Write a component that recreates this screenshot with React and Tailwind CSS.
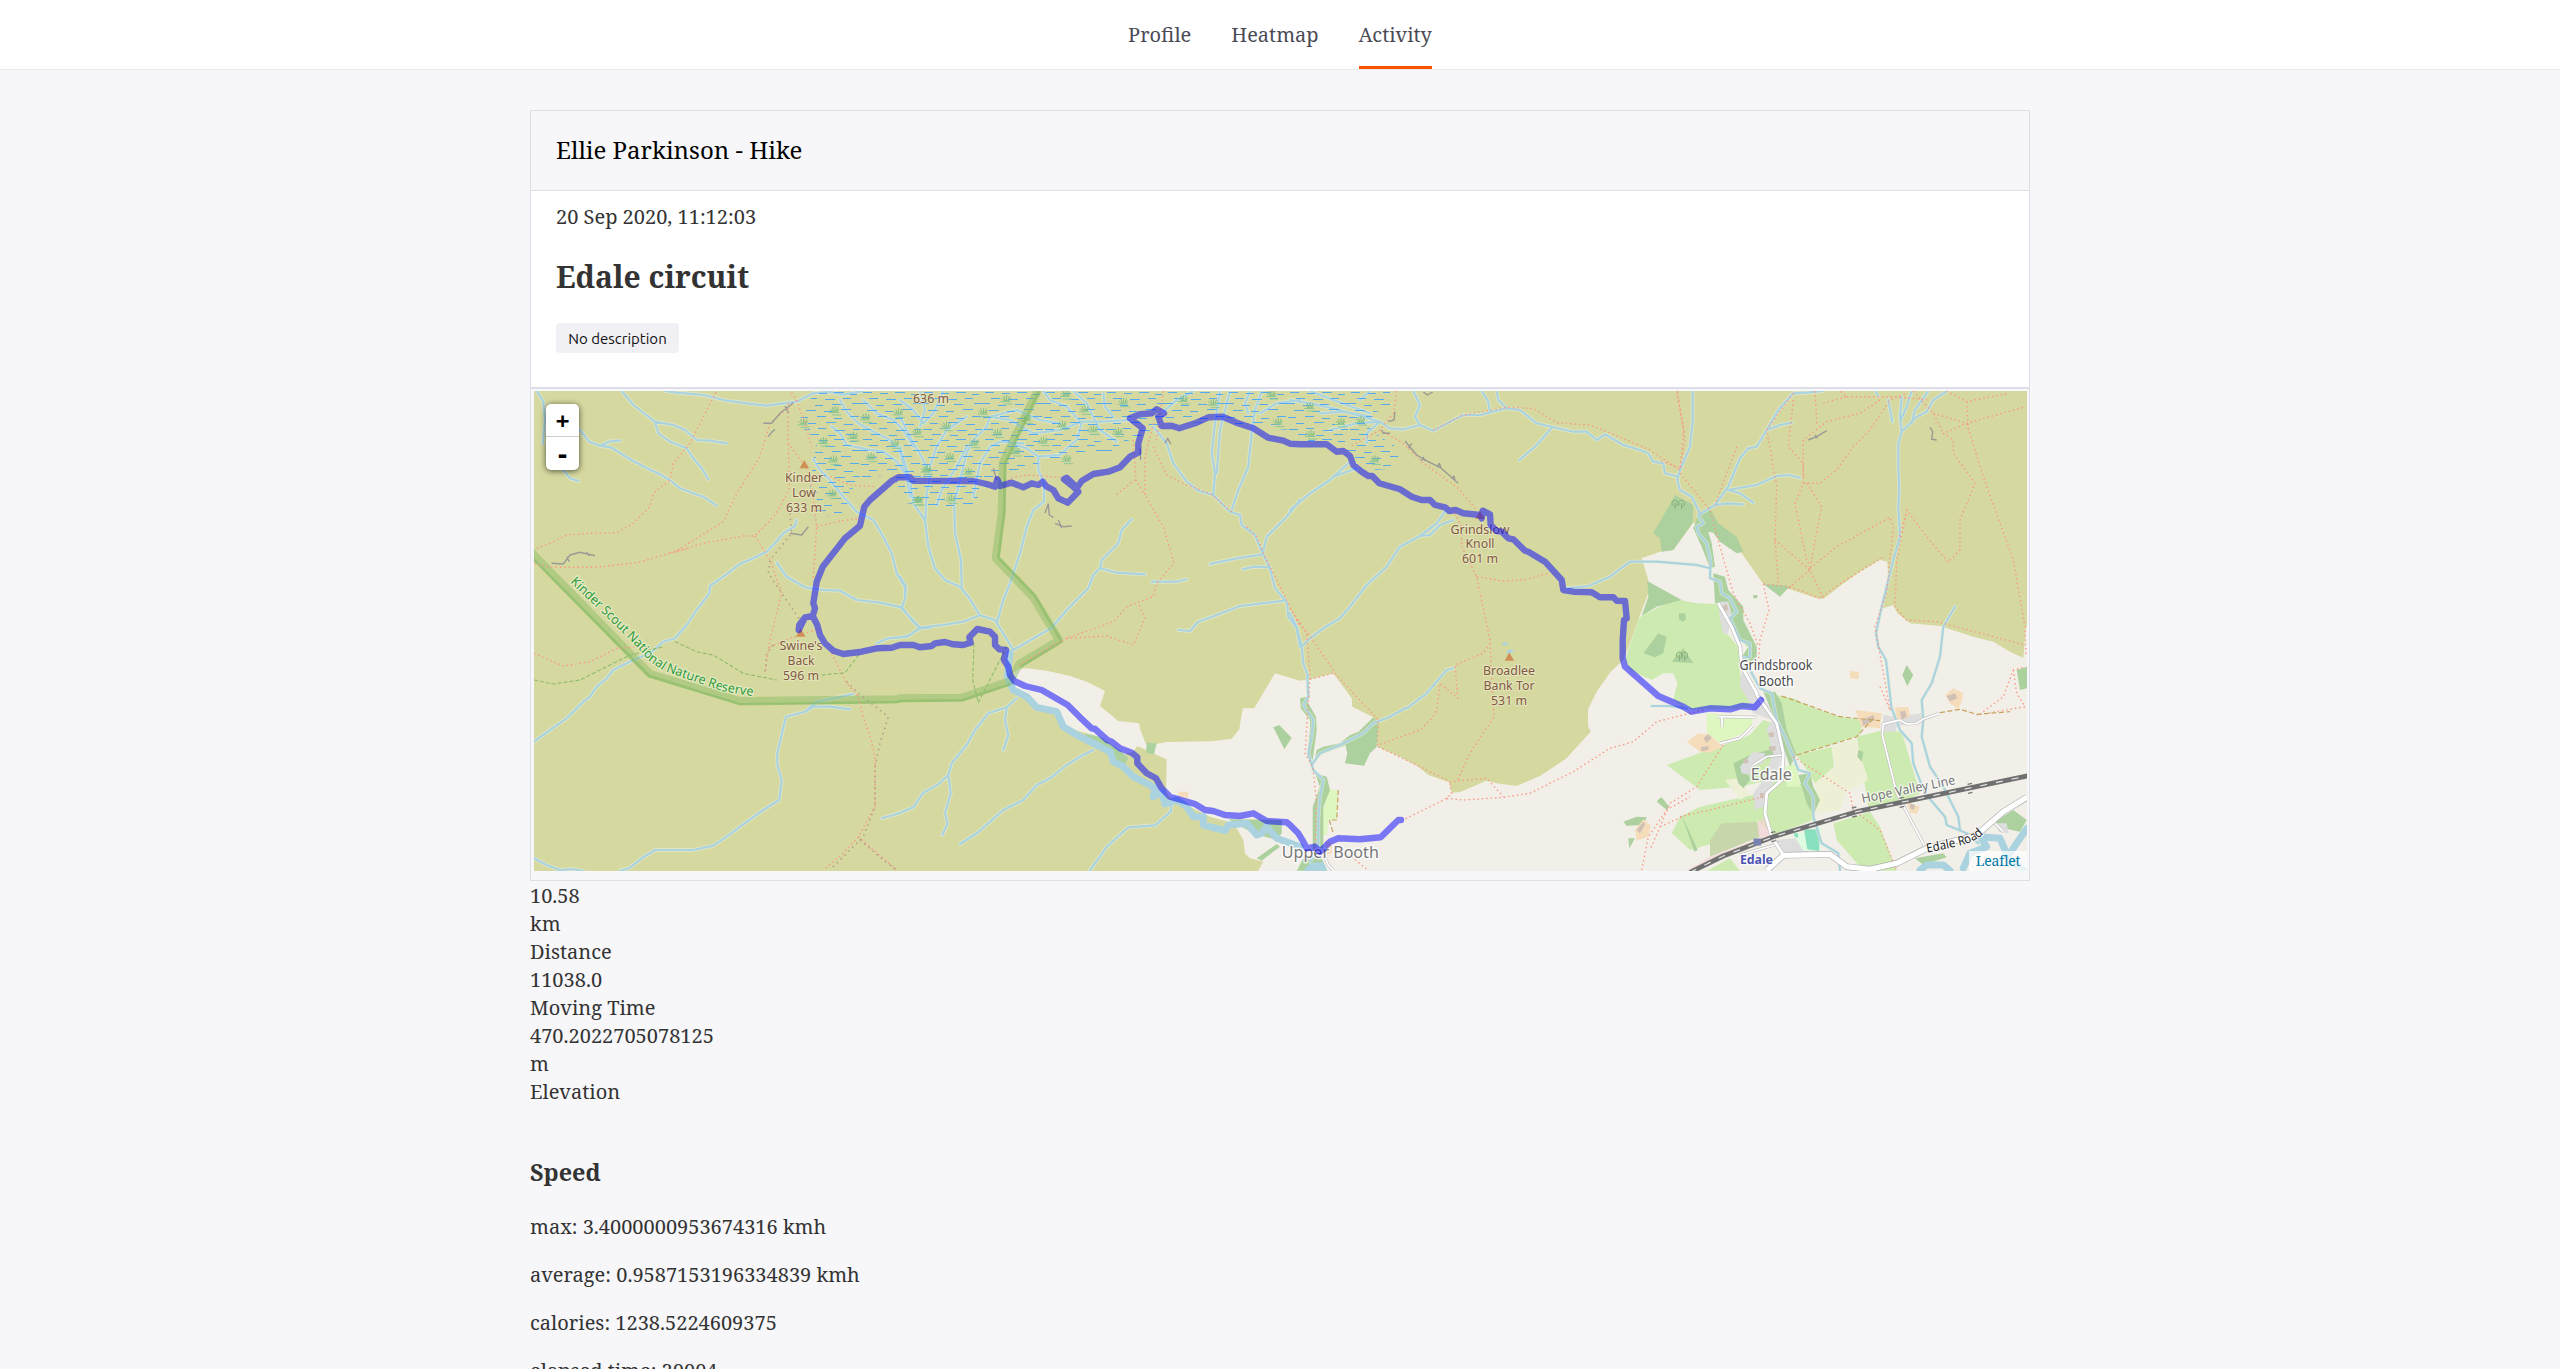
import React from "react";

const SERIF = "font-['Noto_Serif','DejaVu_Serif_Condensed','DejaVu_Serif',serif]";

/* Survey sheets of the map: origin of each sheet, drawn at three units to the pixel. */
const SHEETS = {
  A: [530, 380], B: [900, 380], C: [1290, 380], D: [1660, 380],
  E: [530, 640], F: [900, 620], G: [1290, 620], H: [1650, 620],
};

const pt = (s, p) => {
  const [x, y] = p.split(",").map(Number);
  return `${(SHEETS[s][0] + x / 3).toFixed(1)},${(SHEETS[s][1] + y / 3).toFixed(1)}`;
};

/* "A 1,2 3,4 B 5,6" -> one polyline across sheets */
const line = (src) => {
  let s = "A";
  const out = [];
  src.trim().split(/\s+/).forEach((t) => {
    if (SHEETS[t]) s = t;
    else out.push(pt(s, t));
  });
  return "M" + out.join("L");
};
const lines = (list) => list.map(line).join("");
const areas = (list) => list.map((l) => line(l) + "Z").join("");

const LAND = areas([
  "F 355,148 380,145 440,152 510,168 560,185 615,213 600,258 655,303 718,310 720,328 738,372 768,372 800,366 935,364 995,356 1018,328 1028,265 1063,265 1125,160 1200,182 G 60,178 130,160 185,235 187,260 250,292 262,380 330,410 385,440 415,465 478,487 485,518 510,516 590,482 620,490 680,498 750,468 828,416 902,335 894,318 894,268 920,215 962,155 1000,120 1020,70 1045,0 C 1075,640 1075,600 1055,535 1110,515 D 40,510 100,428 150,440 200,480 245,520 310,612 390,628 470,655 490,657 540,618 600,575 660,540 682,545 685,600 668,685 700,676 712,700 750,730 840,738 940,770 1000,785 1055,818 1090,833 1098,740 1110,740 H 1140,760 F 1070,760 1090,725 1050,715 1035,700 1030,660 1010,625 985,605 930,590 870,560 808,530 798,515 800,418 712,378 700,395 665,405 560,340 490,320 480,290 410,262 370,225 340,200 340,160",
]);

const MEADOW = areas([
  "C 1055,707 1120,675 1170,660 D 60,660 110,670 175,672 200,760 235,800 240,880 260,950 290,975 H 320,262 240,268 160,268 125,270 85,240 G 1200,275 1150,240 1162,190 1150,160 1120,160 1085,180 1020,150 1005,120 1045,0",
  "H 380,225 430,235 480,260 570,290 640,300 630,345 540,375 440,405 410,330",
  "H 50,435 160,395 220,375 300,345 340,300 370,310 395,400 360,480 270,500 150,510",
  "H 90,590 150,560 330,520 350,480 440,480 490,530 490,600 370,645 320,600 230,585",
  "H 620,350 700,330 755,335 810,520 760,545 655,560",
  "H 440,405 545,380 552,440 495,490",
  "H 550,610 660,575 690,620 740,752 640,752 560,660",
  "H 65,640 90,590 230,580 320,600 330,630 120,690",
  "H 170,752 240,715 270,752",
]);

const LAWN = areas([
  "H 170,280 310,290 300,330 210,370 170,340",
  "H 405,440 440,430 450,500 410,500",
  "G 115,508 145,512 140,600 115,600 110,645 95,645 100,570",
]);

const CREAM = areas([
  "H 545,380 615,355 655,480 600,510 495,490 555,440",
  "H 495,490 590,510 570,570 500,580",
  "H 225,480 265,475 300,520 270,540",
]);

const FOREST = areas([
  "C 1155,345 1210,375 D 98,428 D 40,510 C 1115,515 1110,475 1090,460",
  "D 150,385 175,430 230,470 250,515 230,520 180,485 160,458 145,455 155,490 165,560 150,565 125,500 100,445 115,405",
  "D 160,580 195,590 205,630 250,680 250,720 290,800 290,830 270,850 240,840 265,800 240,780 205,710 190,670 165,670",
  "D 310,612 390,618 360,650",
  "D 740,855 760,885 742,918 727,885",
  "D 1070,870 1101,860 1101,925 1080,930",
  "D 280,645 292,645 292,655 280,655",
  "C 1072,603 1175,660 1100,680 1055,707 1075,650",
  "C 1060,820 1105,760 1130,770 1120,820 1095,832",
  "C 1167,700 1185,700 1188,718 1177,726 1166,716",
  "C 1145,845 1180,805 1210,850",
  "F 555,340 600,350 665,395 685,415 670,440 640,420 560,355",
  "F 740,368 770,370 762,403 738,398",
  "F 1120,322 1138,315 1175,353 1153,388",
  "F 985,598 1145,600 1145,640 1130,660 1060,640",
  "F 1070,715 1130,672 1140,680 1085,722",
  "G 30,235 50,230 55,250 78,290 80,330 68,420 52,400 60,330 60,300 32,265",
  "G 165,370 175,365 250,292 265,310 260,380 240,400 222,437 165,430 172,400",
  "G 75,415 80,390 100,380 150,370 180,345 220,330 215,345 160,378 100,400",
  "G 75,460 110,470 120,510 100,560 100,690 68,690 68,560 90,500",
  "G 1000,605 1040,590 1070,592 1060,615 1010,617",
  "G 1015,655 1035,655 1018,685",
  "G 1100,545 1110,533 1138,560 1130,570",
  "G 20,752 40,715 95,715 112,752",
  "H 20,545 35,532 58,560 50,570",
  "H 95,585 143,690 133,695",
  "H 340,215 375,215 395,250 410,330 440,405 420,440 400,380 380,310",
  "H 250,430 300,405 390,380 385,410 330,420 290,440 300,480 280,505 265,490",
  "H 445,465 480,460 490,500 510,540 490,585 470,550",
  "H 625,390 640,395 635,425 622,410",
  "H 1035,605 1090,570 1130,600 1110,635 1060,625",
  "H 795,715 880,700 890,712 820,735",
  "H 1100,150 1131,140 1131,200 1110,208",
]);

const OLIVE = areas(["H 215,610 320,605 330,650 180,710 180,660"]);

const BUILT = areas([
  "H 275,150 300,190 350,250 385,310 395,400 380,470 350,520 340,560 315,570 310,520 340,480 370,400 350,330 365,300 310,280 295,240 270,200",
  "H 270,440 310,395 345,400 340,430 310,440 300,465 275,460",
  "D 175,665 205,665 215,700 205,760 190,762 180,720",
  "H 700,285 740,290 815,280 820,300 740,320 735,335 697,335",
  "H 370,660 440,655 480,700 400,705",
  "H 1040,610 1070,610 1075,640 1045,635",
]);

const YARD = areas([
  "H 600,153 627,155 625,178 600,175",
  "H 885,225 910,205 940,220 935,245 925,268 900,250",
  "H 615,270 695,280 690,325 635,320",
  "H 735,262 775,262 780,290 740,300",
  "H 110,365 145,340 180,345 218,380 180,398 150,395",
  "H 770,548 810,560 800,582 780,578",
  "G 1035,630 1060,598 1082,615 1075,650 1040,662",
  "F 835,515 865,515 865,535 835,530",
  "G 105,660 125,670 125,700 110,705",
]);

const BUILDINGS = areas([
  "H 160,355 175,342 185,355 170,368", "H 152,382 175,378 175,390 155,394",
  "H 890,228 915,220 922,235 900,244", "H 635,300 670,285 675,300 640,318",
  "H 750,275 765,272 770,290 755,300", "H 355,340 370,335 372,350 358,352",
  "H 355,380 378,378 376,392 358,390", "H 280,420 292,415 296,428 284,432",
  "D 185,680 200,672 205,690 190,695", "G 1040,630 1060,605 1066,612 1050,640",
  "H 330,520 342,518 340,535 330,532", "H 780,550 795,555 792,570 780,565",
]);

const PINK = areas([
  "H 322,605 352,590 357,650 327,655",
  "H 180,710 330,655 300,680 150,745 110,752",
]);

const STREAMS = lines([
  "A 20,33 40,65 45,120 38,190",
  "A 100,270 120,295 145,303",
  "A 150,150 178,185 210,197 245,203 300,238 345,262 380,278 420,300 450,325 490,340 520,350 560,377",
  "A 210,197 240,184 270,182",
  "A 275,33 310,75 345,102 375,125 430,135 465,150 500,180 540,182 590,190",
  "A 375,125 385,160 420,185 470,205 490,235 515,265 535,298",
  "A 405,33 440,38 520,45 590,62 650,70 710,77 760,70 800,65 850,40 900,36 940,44 1000,33",
  "A 800,420 795,438 760,460 735,490 710,515 670,535 628,553 580,590 540,618 538,640 500,690 470,735 435,775 400,785 360,820 310,840 250,870 230,895 200,920 180,950 160,965 E 150,195 110,235 60,270 12,305",
  "A 740,548 770,590 825,622 880,630 930,632 980,660 1050,668 1115,682 1150,725 1170,745 1200,743",
  "A 1040,790 1075,775 1130,770 1170,745",
  "A 850,237 870,270 900,300 940,350 980,395 1030,420 1060,470 1085,520 1100,580 1125,620 1125,655 1115,682",
  "A 930,60 950,95 985,130 1040,160 1080,180 1110,215 1130,290 1140,350",
  "A 905,140 930,160 950,195 1010,208 1060,215 1100,245 1125,280",
  "A 1000,60 1040,100 1090,120 1120,150 1150,200",
  "E 825,215 860,185 910,175 970,162", "E 825,215 850,200 900,200 960,208",
  "E 825,215 768,230 758,270 742,340 742,375 755,420 748,480 700,510 630,560 590,590 550,617 490,630 375,630 335,655 300,683 270,693",
  "E 12,655 50,675 90,690 125,687 160,693",
  "F -55,595 -20,585 0,578 40,562 70,518 115,493 145,465 155,430 200,375 225,330 265,280 320,262 350,235",
  "F 145,465 152,520 135,580 143,610 127,645", "F 320,262 315,300 325,345 310,390",
  "F 180,672 230,640 310,570 370,540 410,495 450,475 500,435 540,410 580,390",
  "F 570,750 600,710 620,680 685,622 765,616 812,575 815,550",
  "B 60,743 130,735 190,725 240,706 285,720 340,810",
  "B 240,706 205,650 180,620 135,600 105,565 85,500 75,420 40,370 30,300 0,200",
  "B 75,430 80,340 90,290 70,240 30,170 0,110", "B 90,260 110,200 140,150 200,110",
  "B 185,620 183,540 165,460 163,370 180,300 200,220 220,180 260,140 270,110",
  "B 220,350 240,250 270,200 300,185 370,190", "B 110,375 125,330 170,260 200,200",
  "B 290,730 310,660 330,610 360,520 380,440 400,390 432,365 432,310 415,270 415,230 380,205 330,190",
  "B 415,230 480,225 500,205 530,180 545,130 500,80 450,60 430,33",
  "B 270,110 330,120 400,160 480,150 545,125 600,125 690,120",
  "B 270,110 350,90 420,120 480,130", "B 520,33 560,70 580,110 600,150 650,185",
  "B 610,40 615,80 640,110", "B 60,33 75,90 60,140", "B 0,60 40,90 70,130 100,100 130,33",
  "B 340,810 455,743 500,690 565,625 580,585 600,565 605,540 655,490 665,450 695,418",
  "B 600,565 650,578 735,583", "B 0,590 18,620 15,655 5,685 60,743", "B 0,773 30,765 60,743",
  "B 755,605 830,605 860,598", "B 835,750 870,753 895,725 950,705 1020,678 1155,662",
  "B 930,552 1010,535 1090,523", "B 1028,568 1060,560 1110,562",
  "B 1200,360 1160,410 1100,470 1088,520",
  "B 760,140 800,190 820,250 860,305 895,332 940,345 990,395 1020,405 1025,435 1065,465 1088,520 1110,565 1125,625 1160,665 1165,710 1190,745 1200,800",
  "B 790,95 830,60 880,33",
  "B 940,345 945,280 935,220 945,130 960,33", "B 950,280 960,150 990,33",
  "B 995,390 1015,330 1045,260 1055,160 1065,90 1085,33", "B 1045,100 1035,70 1050,33", "B 1080,100 1130,70 1200,60",
  "C 0,60 60,70 130,85 200,105 270,125", "C 90,100 160,95 240,110", "C 120,150 200,130 270,125", "C 60,33 130,60 240,100",
  "C 230,190 230,160 270,125", "C 210,60 240,33",
  "C 0,390 60,340 120,300 175,250", "C 130,290 200,265",
  "C 465,395 440,430 390,468 330,500 290,560 230,615 180,680 150,715 100,745 60,775 35,800",
  "C 490,420 450,435 420,465 390,468",
  "C 490,865 470,870 410,940 350,985 G 345,265 300,290 250,310 220,340 150,375 90,400 68,430",
  "C 370,33 390,75 375,110 390,135 430,152 480,125 520,105 570,105 650,85 690,90 740,130 790,142 850,155 890,155 920,180 945,163 1000,195 1050,210 1075,220 1090,245 1120,250 1125,280 1165,290",
  "C 390,135 340,148 300,145 270,125", "C 575,33 595,65 600,95", "C 620,33 625,60 650,85",
  "C 787,142 740,195 688,240", "C 830,625 895,618 960,590 1020,545 1100,545 1200,553 D 110,555 150,565",
  "C 0,700 20,740 35,800 40,850 55,890 G 52,170 55,230 40,255 70,300 65,350 55,400 70,450 100,480 90,530 85,600 85,690 60,725",
  "D 98,33 98,120 90,200 60,270 52,300 60,330 95,350 120,400 115,405 130,430 110,440 115,460 140,490 152,545 150,595 180,605 185,640 210,655 230,695 210,715 240,780 270,790 270,830 245,835",
  "D 120,402 165,375 205,320 225,270 240,235 265,205 290,200 320,150 355,90 400,40 440,38 490,33",
  "D 320,150 360,135 395,128", "D 205,330 290,315 350,288 385,285 420,293",
  "D 205,330 240,340 280,368", "D 165,375 205,370 250,373",
  "D 725,155 715,190 715,260 718,330 715,380 720,470 700,540 665,680 648,760 655,800 678,840 695,990",
  "D 725,155 720,110 725,50", "D 722,120 740,80 755,33", "D 725,155 770,110 800,95 820,60 860,33", "D 755,130 765,90 805,33",
  "D 685,60 697,125", "D 645,33 655,48",
  "D 885,680 850,740 840,830 815,910 785,960 790,1020 785,1070 810,1160 850,1220 895,1310 900,1350",
  "H 725,265 750,330 785,370 790,430 825,520 885,590 890,615 950,640 985,670",
  "H 270,130 300,150 330,205 365,220 380,300 405,350 430,410 445,450 480,460 465,490 490,530 490,590 515,670 565,700 570,750",
  "H 5,258 60,258 110,265",
]);

const RIVERS = lines([
  "F 330,100 322,170 340,210 380,230 410,262 470,275 490,320 540,350 600,380 630,395 640,425 670,440 700,470 740,490 765,505 760,530 785,515 795,552 830,540 860,560 880,590 910,590 910,615 975,632 985,615 1040,610 1070,645 1085,640 1100,620 1130,655 1200,680",
  "H 810,750 830,735 880,735 900,752",
  "H 940,745 960,700 1010,680 990,650 1050,655 1065,690 1080,720 1120,750",
  "H 1131,625 1100,670 1080,700",
]);

const FOOTPATHS = lines([
  "A 20,505 60,490 110,465 180,460 260,458 310,430 360,380 370,340 420,300 430,250 480,190 520,110 560,33",
  "A 12,550 60,562 200,562 320,548 420,520 480,505",
  "A 420,518 520,490 640,468 675,468 735,405 778,330 775,190",
  "A 430,518 580,425 620,340 690,230 720,130 800,60 780,33",
  "A 775,70 775,190 840,280 860,440 855,520 850,600", "A 800,60 825,130 845,200",
  "A 860,440 920,425 990,415", "A 675,468 720,540 755,640 720,780 705,880",
  "A 12,820 100,858 180,845 260,805 340,800", "A 900,290 960,315 1040,320", "A 720,800 780,775 870,745",
  "E 905,40 950,130 985,170 1000,230 1020,290 1035,350 1035,500 985,590 940,640 880,690", "E 985,590 1100,690",
  "B 760,130 735,230 735,345 790,440 822,550 770,610 760,650 680,680 640,725 500,775",
  "B 500,775 620,768 700,795 735,715 715,670", "B 760,200 800,285 860,315 930,340 1000,400",
  "B 700,180 708,300 735,345", "B 650,343 705,300", "B 1040,440 1070,470 1100,540 1200,740",
  "B 500,775 355,855", "B 310,325 330,295 380,285 480,292", "B 790,33 770,180", 
  "C 320,33 310,100 270,150 180,200", "C 270,150 340,190 400,250 500,320 560,390", "C 495,400 515,440 515,500",
  "C 515,500 560,590 600,780 605,900 G 605,180 612,290 540,400 500,485",
  "C 560,590 640,603 700,600 780,578",
  "C 600,790 580,820 495,855 503,955 450,910 440,990 G 430,290 390,330 265,375",
  "G 265,380 390,440 480,485 590,475 640,530",
  "C 430,150 520,105 650,82 730,85 800,128 900,135 960,158 1080,210 1170,270 1185,180 1160,33",
  "C 0,685 60,770 130,870 G 130,155 265,300 262,375", "G 60,178 130,160", "G 20,0 50,40 60,170 45,400 68,440 80,550 75,690",
  "G 480,490 485,520 470,535 340,600",
  "G 470,535 520,540 640,532 720,520 850,455 960,385 1030,365 1100,305 1200,280 H 160,270",
  "G 1055,750 1075,650 1130,570 1200,530", "G 1110,620 1200,580", "G 185,710 235,752",
  "D 52,33 72,150 60,265 0,240", "D 60,280 150,390 180,500 220,640 270,730 295,800",
  "D 400,40 320,150 350,320 345,480 355,610", "D 345,480 450,570 490,655",
  "D 400,60 385,200 430,250 430,310 405,370 440,540 455,570",
  "D 440,310 485,380 465,480 450,570 385,625", "D 430,290 430,180 500,125 600,100 660,60", "D 465,33 470,130",
  "D 430,310 480,310 530,270 580,200 630,150 690,60 740,40", "D 450,565 530,500 690,412 700,440 680,640 645,740 690,990",
  "D 720,470 740,390 800,470 865,547 900,510 900,420 945,310 880,220 880,180 850,160 920,130 1095,80",
  "D 760,33 820,100 850,160", "D 820,100 920,130 970,290 1060,540 1095,740 1098,830",
  "D 860,33 920,65 1045,40", "D 920,65 925,150", "D 740,390 710,540 705,680 740,720 830,725 1095,795",
  "D 310,612 390,620 480,655 550,605 670,530", "D 310,612 327,690 300,780 295,850",
  "D 560,50 700,50 810,60", "D 230,200 165,375", "D 490,70 560,50 540,33",
  "H 690,200 720,270", "H 430,410 600,520 610,570 690,630 740,750",
  "H 220,375 140,500 60,550 0,690", "H 90,590 200,565 340,530",
  "H 1000,275 1060,230 1090,150 1125,140", "H 1125,260 980,285", "H 1090,150 1100,220 1125,260", 
]);

const TRACKS_GREEN = lines([
  "E 12,120 70,132 150,120 300,45 400,20", "A 435,785 500,815 550,825 640,880 740,900",
  "A 875,885 945,878 990,820", "B 222,790 218,900 235,968 320,800",
]);
const TRACKS_GREY = lines([
  "A 780,400 785,460 720,540 715,580 790,690 810,720", "A 730,795 710,820 705,880",
  "E 950,125 985,160 1075,230 1050,310 1035,380 1035,500 1000,590 900,690", "E 990,600 1060,660 1100,690",
]);
const TRACKS_BROWN = lines([
  "H 395,228 480,258 570,290 690,302", "H 440,405 540,375 620,350 670,295",
  "H 870,278 930,268 980,283 1080,275", "G 145,510 140,600 118,600 130,640",
]);

const CLIFFS = lines([
  "A 700,130 725,130 750,100 790,68", "A 765,78 775,98", "A 715,170 722,160 735,148",
  "A 65,550 100,552 120,525 150,517 195,527", "A 110,530 118,545", "A 170,517 178,527",
  "B 435,400 445,372 448,405 460,412", "B 465,430 490,440 515,438", "B 475,420 485,445", "B 720,205 722,240", "B 280,265 290,300", "B 795,190 803,175 812,192",
  "C 345,183 380,225 415,245 450,262 505,310", "C 355,205 365,190", "C 393,243 400,232 404,243", "C 442,262 448,250 454,266", "C 485,297 492,288 496,305",
  "C 295,125 312,120 315,95", "C 275,150 280,160 300,160", "C 400,36 412,45 428,36",
  "D 445,180 470,170 500,152", "D 465,165 472,175", "D 810,142 818,155 815,178 830,180", "A 780,460 815,465 835,440",
]);

const ROADS_MINOR = lines([
  "H 830,690 740,520 697,345 700,312 750,300 770,312 800,310 820,297 870,280", "H 395,405 350,410 310,435",
  "H 203,290 320,292", "H 216,290 216,322", "H 210,370 270,355 310,315", "H 390,670 270,705", "G 95,690 115,735 130,752",
  "H 1030,605 1060,635",
]);
const ROADS = lines([
  "D 175,670 215,740 240,800 245,860 290,940 H 320,225 380,310 400,400 395,480 350,520 345,580 365,650 400,705",
]);
const ROADS_MAJOR = lines(["H 350,752 400,706 540,703 590,740 660,748 740,730 830,685 980,645 1060,575 1131,532"]);
const RAIL = lines(["H 120,757 220,708 370,650 620,575 1135,467"]);

const ROUTE = lines([
  "G 333,600 325,600 272,652 210,658 145,655 120,665 90,695 75,680 50,685 40,665 25,640 0,615 F 1160,607 1100,603 1060,580 1020,588 975,585 940,573 915,570 885,552 810,530 785,505 768,475 740,460 712,430 712,412 695,398 660,385 635,365 622,360 585,327 575,325 540,292 503,255 425,210 375,198 343,183 330,165 325,140 312,120 318,90 298,88 285,75 285,50 270,35 232,27 208,52 212,68 190,75 160,73 135,66 105,70 95,78 60,82 40,75 0,75 A 1085,803 1040,805 995,815 940,822 910,812 885,790 870,765 862,735 848,708 825,712 808,735 806,750 825,712 848,708 855,685 850,670 860,605 878,560 945,475 990,437 1003,380 1020,360 1085,303 1105,292 1140,292 B 40,302 220,303 260,312 285,320 292,298 300,318 335,308 370,322 395,310 415,315 428,305 440,320 460,330 475,355 503,368 535,335 520,320 492,298 500,293 520,312 530,325 545,303 580,282 625,275 660,262 690,230 715,218 715,190 728,145 690,115 720,103 755,100 770,88 792,100 775,110 785,138 815,137 838,145 890,128 925,112 968,110 1010,128 1060,145 1105,173 1150,182 C 0,191 30,193 110,193 140,215 160,213 180,228 190,255 215,275 235,288 247,288 268,310 330,328 365,350 395,360 420,360 435,375 465,382 478,393 497,390 520,400 570,405 575,415 578,392 600,403 602,435 620,453 635,455 655,475 670,478 705,512 715,515 765,545 815,600 820,630 850,635 905,637 930,652 970,652 980,662 1005,663 1010,715 1002,720 998,780 998,835 1005,860 1105,948 1180,980 H 125,275 180,265 240,268 275,258 315,262 333,240",
]);

const MARSH_AREA = areas([
  "A 850,33 835,80 800,130 860,180 850,240 840,320 860,360 850,412 945,405 960,330 1030,290 1085,280 B 20,370 120,382 220,372 250,330 300,285 450,240 560,222 650,215 660,190 720,170 800,120 C 0,150 60,185 160,195 180,225 250,270 325,265 325,205 240,150 250,100 300,80 300,33",
]);

const TUFTS = [
  ["A", 912, 90], ["A", 1005, 112], ["A", 1103, 97], ["A", 968, 168], ["A", 878, 183], ["A", 908, 238], ["A", 1020, 230], ["A", 1092, 190],
  ["A", 1160, 155], ["A", 1188, 268], ["A", 905, 340], ["A", 1163, 360], ["A", 818, 127], ["B", 317, 57], ["B", 248, 95], ["B", 137, 137], ["B", 378, 115], ["B", 484, 133],
  ["B", 552, 88], ["B", 578, 148], ["B", 652, 155], ["B", 668, 65], ["B", 428, 182], ["B", 345, 213], ["B", 498, 236], ["B", 290, 158], ["B", 220, 188],
  ["B", 147, 230], ["B", 202, 275], ["B", 152, 355], ["B", 50, 360], ["B", 78, 268], ["B", 848, 57], ["B", 938, 68], ["B", 1132, 125], ["B", 1113, 42],
  ["B", 495, 42], ["C", 57, 78], ["C", 150, 126], ["C", 210, 120], ["C", 60, 162], ["C", 252, 238],
];

const PEAKS = [["A", 823, 253], ["A", 812, 758], ["C", 570, 405], ["C", 658, 830]];
const TREES = [["D", 45, 372], ["D", 65, 372], ["D", 58, 828], ["D", 74, 828]];

/* sheet, x, baseline, text, width in px */
const PEAK_LABELS = [
  ["A", 822, 306, "Kinder", 38], ["A", 822, 350, "Low", 24], ["A", 822, 395, "633 m", 36],
  ["A", 813, 810, "Swine's", 43], ["A", 813, 855, "Back", 27], ["A", 813, 899, "596 m", 36],
  ["B", 93, 68, "636 m", 36],
  ["C", 570, 461, "Grindslow", 59], ["C", 570, 505, "Knoll", 29], ["C", 570, 550, "601 m", 36],
  ["C", 657, 884, "Broadlee", 52], ["C", 657, 929, "Bank Tor", 51], ["C", 657, 974, "531 m", 36],
];

function MapLabel({ at, w, children, className }) {
  const [s, x, y] = at;
  return (
    <text
      x={SHEETS[s][0] + x / 3}
      y={SHEETS[s][1] + y / 3}
      textAnchor="middle"
      textLength={w}
      lengthAdjust="spacingAndGlyphs"
      className={className}
    >
      {children}
    </text>
  );
}

function TerrainMap() {
  const halo = "[paint-order:stroke] [stroke-linejoin:round] font-['Noto_Sans',sans-serif]";
  return (
    <svg viewBox="534 391 1493 480" className="block h-[480px] w-[1493px]" fill="none" strokeLinejoin="round">
      <defs>
        <pattern id="marsh" width="61" height="47" patternUnits="userSpaceOnUse" x="800" y="391">
          <path
            d="M2 1.500h9M19 2.500h8M34 1.500h10M50 3.500h7M8 7.500h9M25 8.500h10M43 7.500h8M0 12.500h7M15 14.500h8M32 13.500h9M52 12.500h9M6 19.500h10M24 20.500h8M41 18.500h10M0 26.500h8M17 25.500h9M34 27.500h8M50 25.500h9M8 32.500h8M26 31.500h10M44 33.500h9M1 38.500h9M18 37.500h8M35 39.500h10M53 38.500h7M10 43.500h9M28 44.500h8M46 43.500h9"
            stroke="#58aaf0"
            strokeWidth="1.200"
          />
        </pattern>
        <path id="reserve-name" d={line("A 120,607 230,712 310,790 360,845 400,872 500,907 580,934 675,950")} />
        <path id="road-name" d={line("H 832,698 900,684 950,672 985,655 1005,638")} />
      </defs>

      <rect x="534" y="391" width="1493" height="480" fill="#d6d99f" />
      <path d={LAND} fill="#f2efe9" />
      <path d={MEADOW} fill="#cdebb0" />
      <path d={CREAM} fill="#eef0d5" />
      <path d={LAWN} fill="#def6c0" />
      <path d={FOREST} fill="#add19e" />
      <path d={OLIVE} fill="#c8d7ab" />
      <path d={BUILT} fill="#dddddd" />
      <path d={YARD} fill="#f5dcba" />
      <path d={BUILDINGS} fill="#d0c1b6" />
      <path d={PINK} fill="#f3d3d6" opacity="0.700" />
      <path d={areas(["H 425,635 460,640 515,620 510,692 460,692"])} fill="#dffce2" />
      <path d={areas(["H 462,628 508,628 508,693 472,688", "H 432,640 444,640 444,653 434,650"])} fill="#88e0be" />
      <path d={areas(["G 45,745 62,728 100,726 112,752 40,752", "C 636,788 650,786 655,794 640,796", "C 648,815 660,808 674,812 655,822"])} fill="#aad3df" />

      <path d={STREAMS} stroke="#e3ecdb" strokeWidth="4" opacity="0.600" strokeLinecap="round" />
      <path d={STREAMS} stroke="#aad3df" strokeWidth="2.200" strokeLinecap="round" />
      <path d={RIVERS} stroke="#aad3df" strokeWidth="7" strokeLinecap="round" />
      <path d={MARSH_AREA} fill="url(#marsh)" />

      {TUFTS.map(([s, x, y]) => (
        <g key={s + x + y} transform={`translate(${SHEETS[s][0] + x / 3} ${SHEETS[s][1] + y / 3})`} stroke="#7dbd86" strokeWidth="1">
          <path d="M-1 2L-4 -1M0 2L-2 -3M1 2V-4M2 2L4 -3M3 2L5 -1" />
          <path d="M-5 2.500H5M-2 5H7" stroke="#8cc796" />
        </g>
      ))}

      <g stroke="#7ab55c">
        <path d={line("A -5,503 12,525 360,882 630,963 1100,958 B 0,955 185,953 330,903 358,852 478,781 398,650 287,535 305,400 308,250 345,170 415,28")} strokeWidth="8" opacity="0.400" />
        <path d={line("A 5,530 12,540 358,888 630,973 1100,966 B 0,963 187,961 332,913")} strokeWidth="2.600" opacity="0.450" />
        <path d={line("B 362,860 484,784 405,648 295,533 312,400 315,250 352,170 420,28")} strokeWidth="2.600" opacity="0.450" />
      </g>

      <path d={FOOTPATHS} stroke="#f79a86" strokeWidth="1.400" strokeDasharray="1.500 2.900" />
      <path d={TRACKS_GREEN} stroke="#8dbb6c" strokeWidth="1.100" strokeDasharray="4 2" />
      <path d={TRACKS_GREY} stroke="#b39a8c" strokeWidth="1.500" strokeDasharray="1.500 4" />
      <path d={TRACKS_BROWN} stroke="#c6a15a" strokeWidth="1.200" strokeDasharray="5 2.500" />
      <path d={CLIFFS} stroke="#9a9a96" strokeWidth="1.400" />

      <path d={ROADS_MINOR} stroke="#bdbdbd" strokeWidth="3" />
      <path d={ROADS_MINOR} stroke="#ffffff" strokeWidth="1.800" />
      <path d={ROADS} stroke="#bcbcbc" strokeWidth="4" />
      <path d={ROADS_MAJOR} stroke="#b0b0b0" strokeWidth="6.600" />
      <path d={ROADS} stroke="#ffffff" strokeWidth="2.800" />
      <path d={ROADS_MAJOR} stroke="#ffffff" strokeWidth="5.200" />
      <path d={RAIL} stroke="#707070" strokeWidth="4.800" />
      <path d={RAIL} stroke="#dedede" strokeWidth="1.300" strokeDasharray="7 9" />
      {[["H", 370, 650], ["H", 613, 576], ["H", 755, 547], ["H", 960, 505]].map(([s, x, y]) => (
        <path key={x} transform={`translate(${SHEETS[s][0] + x / 3} ${SHEETS[s][1] + y / 3})`} d="M-2.500 -4L2 -5M-2 5L2.500 4" stroke="#777777" strokeWidth="1.300" />
      ))}
      <rect x="1753.500" y="838.500" width="7.500" height="7" fill="#7981b0" />

      {TREES.map(([s, x, y]) => (
        <path key={s + x} transform={`translate(${SHEETS[s][0] + x / 3} ${SHEETS[s][1] + y / 3})`} d="M0 5V-1M-2.500 1.500A3 3.500 0 1 1 2.500 1.500M0 3L2 1" stroke="#86ae77" strokeWidth="1" />
      ))}
      {PEAKS.map(([s, x, y]) => (
        <path key={s + x} transform={`translate(${SHEETS[s][0] + x / 3} ${SHEETS[s][1] + y / 3})`} d="M0 -4.300L4.700 4H-4.700Z" fill="#d08f55" />
      ))}

      <g className={halo} fontSize="13" fill="#81593e" stroke="rgba(240,238,215,0.6)" strokeWidth="2">
        {PEAK_LABELS.map(([s, x, y, t, w]) => (
          <MapLabel key={t} at={[s, x, y]} w={w}>{t}</MapLabel>
        ))}
      </g>
      <g className={halo} fill="#4a4a4a" stroke="rgba(255,255,255,0.8)" strokeWidth="3" fontSize="14">
        <MapLabel at={["D", 348, 871]} w={73}>Grindsbrook</MapLabel>
        <MapLabel at={["D", 348, 919]} w={35}>Booth</MapLabel>
      </g>
      <g className={halo} fill="#777777" stroke="rgba(255,255,255,0.8)" strokeWidth="3" fontSize="16.500">
        <MapLabel at={["G", 121, 713]} w={97}>Upper Booth</MapLabel>
        <MapLabel at={["H", 364, 480]} w={41}>Edale</MapLabel>
      </g>
      <g className={halo} stroke="rgba(255,255,255,0.7)" strokeWidth="2.500">
        <text className="font-bold" x="1756.500" y="863.500" textAnchor="middle" textLength="33" fontSize="12.500" fill="#4c53b2">Edale</text>
        <text transform="translate(1862.600 803) rotate(-11.500)" textLength="95" lengthAdjust="spacingAndGlyphs" fontSize="13" fill="#777777">Hope Valley Line</text>
        <text fontSize="12.500" fill="#222222">
          <textPath href="#road-name" textLength="60" lengthAdjust="spacingAndGlyphs">Edale Road</textPath>
        </text>
        <text fontSize="13" fill="#2f9c3c" stroke="rgba(240,245,220,0.6)">
          <textPath href="#reserve-name" textLength="222" lengthAdjust="spacingAndGlyphs">Kinder Scout National Nature Reserve</textPath>
        </text>
      </g>

      <path d={ROUTE} stroke="#0000ff" strokeOpacity="0.500" strokeWidth="6.400" strokeLinecap="round" />
    </svg>
  );
}

function RouteMap() {
  return (
    <div className="relative h-[493px] border border-[#dedee8] pt-[2px] pl-[3px]">
      <TerrainMap />
      <div className="absolute top-[15px] left-[15px] h-[66px] w-[33px] overflow-visible rounded-[5px] bg-white text-center font-['DejaVu_Sans_Mono',monospace] font-bold text-black shadow-[0_1px_6px_rgba(0,0,0,0.65)]">
        <div className="h-[33px] border-b border-[#cccccc] text-[22px] leading-[33px]">+</div>
        <div className="h-[33px] text-[24px] leading-[37px]">-</div>
      </div>
      <div className="absolute right-[2px] bottom-[9px] flex h-5 w-[58px] items-center justify-center bg-white/70 text-[14px] leading-5 tracking-[-0.2px] text-[#0078a8]">
        Leaflet
      </div>
    </div>
  );
}

const STATS = ["10.58", "km", "Distance", "11038.0", "Moving Time", "470.2022705078125", "m", "Elevation"];
const SPEED = ["max: 3.4000000953674316 kmh", "average: 0.9587153196334839 kmh", "calories: 1238.5224609375", "elapsed time: 20004"];

export default function App() {
  return (
    <div className={`h-[1369px] overflow-hidden bg-[#f7f7fa] text-[20px] leading-7 text-[#333333] ${SERIF}`}>
      <header className="flex h-[70px] justify-center gap-10 border-b border-[#eaeaee] bg-white text-[#4b4b56]">
        <span className="pt-[21px]">Profile</span>
        <span className="pt-[21px]">Heatmap</span>
        <span className="border-b-[3px] border-[#fc5200] pt-[21px]">Activity</span>
      </header>

      <main className="mx-auto mt-10 w-[1500px]">
        <section className="border border-[#dedee8]">
          <div className="flex h-20 items-center border-b border-[#dedee8] pb-[2px] pl-[25px] text-[24px] text-black">
            Ellie Parkinson - Hike
          </div>
          <div className="h-[196px] bg-white pt-3 pl-[25px]">
            <p>20 Sep 2020, 11:12:03</p>
            <h1 className="mt-[26px] text-[30px] leading-10 font-bold">Edale circuit</h1>
            <span className="mt-[26px] inline-flex h-[30px] w-[123px] items-center justify-center rounded-[4px] bg-[#f0f0f5] pt-px font-['Ubuntu','Noto_Sans',sans-serif] text-[15px] text-[#111111]">
              No description
            </span>
          </div>
        </section>
        <RouteMap />
        <section className="pt-px">
          {STATS.map((s) => (
            <div key={s}>{s}</div>
          ))}
        </section>
        <section className="mt-12">
          <h2 className="text-[23.4px] leading-9 font-bold">Speed</h2>
          <div className="mt-[23px] flex flex-col gap-5">
            {SPEED.map((s) => (
              <p key={s}>{s}</p>
            ))}
          </div>
        </section>
      </main>
    </div>
  );
}
